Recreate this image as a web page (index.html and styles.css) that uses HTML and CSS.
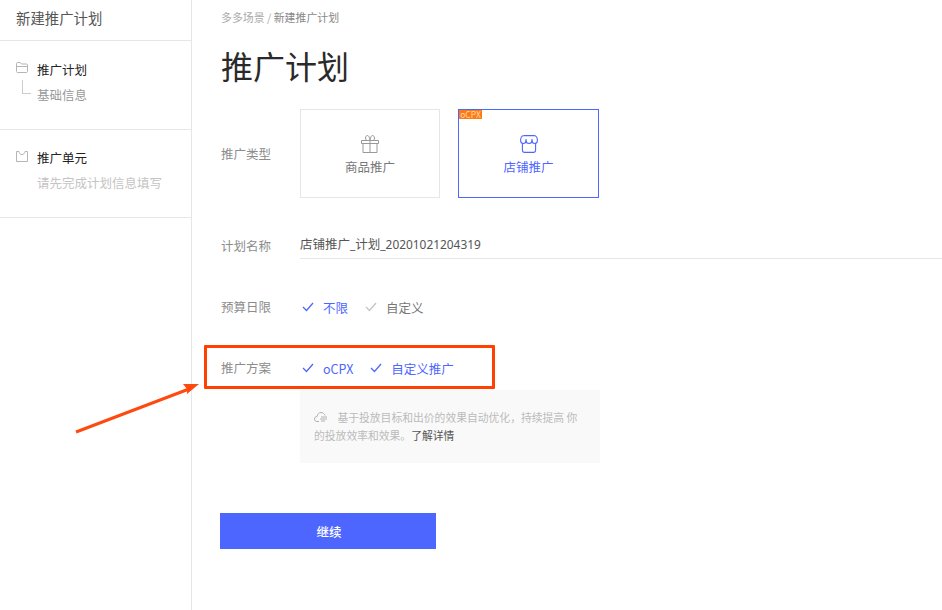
FILE: index.html
```html
<!DOCTYPE html>
<html lang="zh-CN">
  <head>
    <meta charset="UTF-8" />
    <title>新建推广计划</title>
    <link rel="stylesheet" href="styles.css">
  </head>
  <body>
    <div id="page">
      <aside class="side">
        <div class="side-title">新建推广计划</div>
        <div class="side-group">
          <div class="side-row">
            <svg class="side-icon" viewBox="0 0 12 11" width="12" height="11" fill="none" stroke="#b5b5b5">
              <path d="M.5 9.500v-8c0-.6.4-1 1-1h2.700l1.300 1.500h5c.6 0 1 .4 1 1v6.500c0 .6-.4 1-1 1h-9c-.6 0-1-.4-1-1z" />
              <path d="M.5 4.500h11" />
            </svg>
            <span class="side-head">推广计划</span>
          </div>
          <div class="side-row sub">
            <i class="tree"></i>
            <span class="side-sub">基础信息</span>
          </div>
        </div>
        <div class="side-group second">
          <div class="side-row">
            <svg class="side-icon" viewBox="0 0 12 11" width="12" height="11" fill="none" stroke="#b5b5b5">
              <path d="M.5.500h2.500c.3 2 1.300 3 3 3s2.700-1 3-3h2.500v10H.500z" />
            </svg>
            <span class="side-head">推广单元</span>
          </div>
          <div class="side-row sub">
            <span class="side-sub light">请先完成计划信息填写</span>
          </div>
        </div>
      </aside>

      <main class="main">
        <div class="crumbs"><span>多多场景 / </span><b>新建推广计划</b></div>
        <h1>推广计划</h1>

        <div class="row row-type">
          <label>推广类型</label>
          <div class="cards">
            <div class="card">
              <svg viewBox="0 0 18 18" width="18" height="18" fill="none" stroke="#999">
                <path d="M.5 5.500h17v3H.500zM2 8.500v9h14v-9M9 5.500v12" />
                <path d="M9 5.500H6.500C5 5.500 4.500 4.500 4.500 3S5.500.500 6.500.500 8.500 2 9 5.500zM9 5.500h2.500c1.500 0 2-1 2-2.500s-1-2.500-2-2.500S9.500 2 9 5.500z" />
              </svg>
              <span>商品推广</span>
            </div>
            <div class="card active">
              <em class="tag">oCPX</em>
              <svg viewBox="0 0 18 18" width="18" height="18" fill="none" stroke="#4d66ff" stroke-width="1.100">
                <path d="M3.600.600h10.800c1.800 0 3 2.400 3 4.900 0 1.700-1.200 3-2.700 3S12 7.200 12 5.500V4" />
                <path d="M12 5.500c0 1.700-1.300 3-3 3s-3-1.300-3-3V4" />
                <path d="M6 5.500c0 1.700-1.200 3-2.700 3S.600 7.200.600 5.500c0-2.500 1.200-4.900 3-4.900" />
                <path d="M2.400 8.300V15c0 1.300 1 2.400 2.300 2.400h8.600c1.300 0 2.300-1.100 2.300-2.400V8.300" />
              </svg>
              <span>店铺推广</span>
            </div>
          </div>
        </div>

        <div class="row row-name">
          <label>计划名称</label>
          <div class="name-input">店铺推广<span class="latin">_</span>计划<span class="latin">_20201021204319</span></div>
        </div>

        <div class="row row-budget">
          <label>预算日限</label>
          <div class="opts">
            <span class="opt on"><svg class="check" viewBox="0 0 12 10" width="12" height="10"><path d="M1 5l3.500 3.500L11 1" /></svg>不限</span>
            <span class="opt"><svg class="check" viewBox="0 0 12 10" width="12" height="10"><path d="M1 5l3.500 3.500L11 1" /></svg>自定义</span>
          </div>
        </div>

        <div class="row row-plan">
          <label>推广方案</label>
          <div class="opts">
            <span class="opt on"><svg class="check" viewBox="0 0 12 10" width="12" height="10"><path d="M1 5l3.500 3.500L11 1" /></svg>oCPX</span>
            <span class="opt on"><svg class="check" viewBox="0 0 12 10" width="12" height="10"><path d="M1 5l3.500 3.500L11 1" /></svg>自定义推广</span>
          </div>
        </div>

        <div class="hint">
          <svg viewBox="0 0 14 10" width="14" height="10" fill="none" stroke="#b0b0b0">
            <path d="M5 9.500H3C1.500 9.500.500 8.500.500 7S1.500 4.500 3 4.500C3.500 2 5 .500 7 .500s3.500 1.300 4 3" />
            <path d="M7 5h6M6 7h7M7 9h4" />
          </svg>
          <span class="hint-gap"></span>基于投放目标和出价的效果自动优化，持续提高 你的投放效率和效果。<a>了解详情</a>
        </div>

        <button class="next">继续</button>
      </main>

      <div class="mark-box"></div>
      <svg class="mark-arrow" viewBox="0 0 130 60" width="130" height="60">
        <path d="M1 57L114 14" stroke="#ff4a0f" stroke-width="3" fill="none" />
        <path d="M124 9L112 19 112 14 108 9z" fill="#ff4a0f" />
      </svg>
    </div>
  </body>
</html>
```

FILE: styles.css
```css
* {
  margin: 0;
  padding: 0;
  box-sizing: border-box;
}

html,
body {
  height: 100%;
  overflow: hidden;
  background-color: #fff;
  font-family: "Noto Sans CJK SC", "Noto Sans", sans-serif;
  font-size: 12.5px;
  color: #333;
}

#page {
  position: relative;
  display: flex;
  height: 610px;
}

.side {
  width: 192px;
  flex: none;
  border-right: 1px solid #e6e6e6;
}

.side-title {
  height: 41px;
  padding-left: 16px;
  line-height: 36px;
  font-size: 14.4px;
  color: #555;
  border-bottom: 1px solid #e6e6e6;
}

.side-group {
  height: 89px;
  padding: 17px 0 0 16px;
  border-bottom: 1px solid #e6e6e6;
}

.side-group.second {
  height: 88px;
  padding-top: 16px;
}

.side-group.second .side-icon {
  margin-top: -1px;
}

.side-row {
  position: relative;
  display: flex;
  align-items: center;
  height: 22px;
}

.side-row.sub {
  margin-top: 3px;
  padding-left: 21px;
}

.side-icon {
  width: 12px;
  margin-right: 9px;
  margin-top: -3px;
}

.side-head {
  color: #222;
}

.side-sub {
  color: #999;
}

.side-sub.light {
  color: #c4c4c4;
}

.tree {
  position: absolute;
  left: 6px;
  top: -3px;
  width: 9px;
  height: 14px;
  border-left: 1px solid #ccc;
  border-bottom: 1px solid #ccc;
}

.main {
  flex: 1;
  min-width: 0;
  padding: 9px 0 0 29px;
}

.crumbs {
  height: 16px;
  line-height: 16px;
  font-size: 10.9px;
  color: #aaa;
}

.crumbs b {
  font-weight: 400;
  color: #888;
}

h1 {
  margin-top: 15px;
  height: 50px;
  line-height: 50px;
  font-size: 32px;
  font-weight: 400;
  color: #2a2a2a;
}

.row {
  display: flex;
  align-items: center;
}

.row label {
  width: 79px;
  flex: none;
  color: #8c8c8c;
}

.row-type {
  margin-top: 19px;
  height: 89px;
}

.cards {
  display: flex;
  gap: 18px;
}

.card {
  position: relative;
  display: flex;
  flex-direction: column;
  align-items: center;
  justify-content: center;
  width: 140px;
  height: 89px;
  padding-top: 4px;
  border: 1px solid #e6e6e6;
  color: #777;
}

.card svg {
  margin: 0 0 4px;
}

.card span {
  line-height: 20px;
}

.card.active {
  width: 141px;
  border-color: #4d66ff;
  color: #4d66ff;
}

.tag {
  position: absolute;
  left: 0;
  top: 0;
  width: 23px;
  height: 9px;
  line-height: 9px;
  font-size: 8.500px;
  font-style: normal;
  text-align: center;
  color: #ffd9b8;
  background-color: #ff7a0f;
}

.row-name {
  margin-top: 34px;
  height: 27px;
}

.name-input {
  flex: 1;
  height: 27px;
  line-height: 24px;
  color: #555;
  border-bottom: 1px solid #e6e6e6;
}

.latin {
  font-family: "Noto Sans", sans-serif;
  font-size: 11.9px;
}

.row-budget {
  margin-top: 35px;
  height: 26px;
}

.row-plan {
  margin-top: 35px;
  height: 26px;
}

.row-budget label,
.row-plan label {
  margin-top: -2px;
}

.opts {
  display: flex;
  gap: 17px;
  padding-left: 2px;
}

.opt {
  display: flex;
  align-items: center;
  color: #777;
}

.check {
  margin-right: 9px;
  fill: none;
  stroke: #c4c4c4;
  stroke-width: 1.300;
}

.opt.on {
  color: #4d66ff;
}

.opt.on .check {
  stroke: #4d66ff;
}

.hint {
  width: 300px;
  height: 73px;
  margin: 9px 0 0 79px;
  padding: 18px 14px 0 14px;
  line-height: 18px;
  font-size: 10.8px;
  color: #bbb;
  background-color: #f9f9f9;
}

.hint-gap {
  display: inline-block;
  width: 7px;
}

.hint a {
  color: #555;
}

.next {
  display: block;
  width: 216px;
  height: 36px;
  margin: 50px 0 0 -1px;
  padding-left: 2px;
  border: none;
  font-family: inherit;
  font-size: 12.5px;
  font-weight: 500;
  color: #fff;
  background-color: #4d66ff;
}

.mark-box {
  position: absolute;
  left: 204px;
  top: 345px;
  width: 291px;
  height: 44px;
  border: 3px solid #ff4000;
  border-radius: 1px;
}

.mark-arrow {
  position: absolute;
  left: 75px;
  top: 375px;
}
```
